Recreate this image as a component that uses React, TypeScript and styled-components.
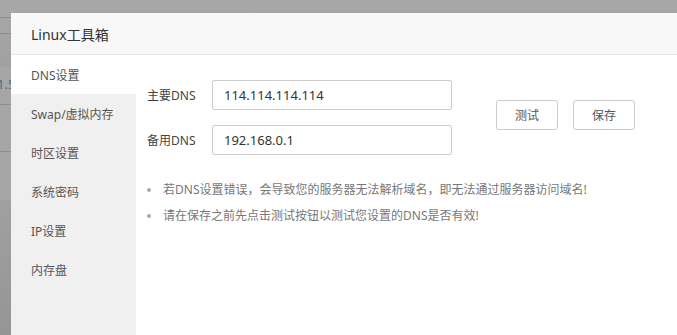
import React, { useState } from "react";
import styled, { createGlobalStyle } from "styled-components";

const Global = createGlobalStyle`
  html, body { margin: 0; padding: 0; }
  body {
    width: 677px;
    height: 335px;
    overflow: hidden;
    font-family: "Noto Sans", "Noto Sans CJK SC", sans-serif;
    background: #fff;
  }
  * { box-sizing: border-box; }
`;

const Backdrop = styled.div`
  position: fixed;
  inset: 0;
  background:
    linear-gradient(#8f8f8f, #8f8f8f) 0 17px / 100% 1px no-repeat,
    linear-gradient(#8f8f8f, #8f8f8f) 0 33px / 100% 1px no-repeat,
    linear-gradient(#8f8f8f, #8f8f8f) 0 104px / 100% 1px no-repeat,
    linear-gradient(#8f8f8f, #8f8f8f) 0 151px / 100% 1px no-repeat,
    linear-gradient(#a6a6a6, #a6a6a6) 0 67px / 100% 133px no-repeat,
    linear-gradient(180deg, #a8a8a8 0%, #9d9d9d 30%, #a0a0a0 60%, #959595 100%);
`;

const BackdropText = styled.span`
  position: absolute;
  left: -3px;
  top: 75px;
  font-size: 13px;
  color: #3d6f93;
`;

const Modal = styled.div`
  position: fixed;
  left: 11px;
  top: 13px;
  right: 0;
  bottom: 0;
  background: #fff;
  display: flex;
  flex-direction: column;
`;

const Header = styled.div`
  height: 42px;
  flex: none;
  background: #f8f8f8;
  border-bottom: 1px solid #e6e6e6;
  display: flex;
  align-items: center;
  padding-left: 20px;
  font-size: 14px;
  color: #333;
`;

const Body = styled.div`
  flex: 1;
  display: flex;
  min-height: 0;
`;

const Sidebar = styled.ul`
  list-style: none;
  margin: 0;
  padding: 0;
  width: 125px;
  flex: none;
  background: #f0f0f0;
`;

const NavItem = styled.li<{ $active?: boolean }>`
  height: 39px;
  display: flex;
  align-items: center;
  padding-left: 20px;
  font-size: 12px;
  color: #555;
  background: ${(p) => (p.$active ? "#fff" : "transparent")};
  cursor: pointer;
`;

const Content = styled.div`
  flex: 1;
  padding: 25px 0 0 11px;
`;

const Top = styled.div`
  display: flex;
  align-items: flex-start;
`;

const Form = styled.div`
  display: flex;
  flex-direction: column;
  gap: 15px;
`;

const Row = styled.div`
  display: flex;
  align-items: center;
`;

const Label = styled.label`
  width: 65px;
  font-size: 12px;
  color: #444;
`;

const Input = styled.input`
  width: 240px;
  height: 30px;
  border: 1px solid #ccc;
  border-radius: 2px;
  padding: 0 11px;
  font-family: inherit;
  font-size: 13px;
  color: #333;
  outline: none;
`;

const Buttons = styled.div`
  display: flex;
  gap: 15px;
  margin: 20px 0 0 44px;
`;

const Button = styled.button`
  width: 62px;
  height: 30px;
  border: 1px solid #ccc;
  border-radius: 3px;
  background: #fff;
  font-family: inherit;
  font-size: 12px;
  color: #555;
  cursor: pointer;
`;

const Tips = styled.ul`
  list-style: none;
  margin: 22px 0 0;
  padding: 0;
`;

const Tip = styled.li`
  position: relative;
  height: 26px;
  line-height: 26px;
  padding-left: 16px;
  font-size: 12px;
  color: #777;
  &::before {
    content: "";
    position: absolute;
    left: 0;
    top: 11px;
    width: 4px;
    height: 4px;
    border-radius: 50%;
    background: #aaa;
  }
`;

const navItems = ["DNS设置", "Swap/虚拟内存", "时区设置", "系统密码", "IP设置", "内存盘"];

export default function App() {
  const [active, setActive] = useState(0);
  const [primary, setPrimary] = useState("114.114.114.114");
  const [secondary, setSecondary] = useState("192.168.0.1");
  return (
    <>
      <Global />
      <Backdrop>
        <BackdropText>1.5</BackdropText>
      </Backdrop>
      <Modal>
        <Header>Linux工具箱</Header>
        <Body>
          <Sidebar>
            {navItems.map((t, i) => (
              <NavItem key={t} $active={i === active} onClick={() => setActive(i)}>
                {t}
              </NavItem>
            ))}
          </Sidebar>
          <Content>
            <Top>
              <Form>
                <Row>
                  <Label>主要DNS</Label>
                  <Input value={primary} onChange={(e) => setPrimary(e.target.value)} />
                </Row>
                <Row>
                  <Label>备用DNS</Label>
                  <Input value={secondary} onChange={(e) => setSecondary(e.target.value)} />
                </Row>
              </Form>
              <Buttons>
                <Button>测试</Button>
                <Button>保存</Button>
              </Buttons>
            </Top>
            <Tips>
              <Tip>若DNS设置错误，会导致您的服务器无法解析域名，即无法通过服务器访问域名!</Tip>
              <Tip>请在保存之前先点击测试按钮以测试您设置的DNS是否有效!</Tip>
            </Tips>
          </Content>
        </Body>
      </Modal>
    </>
  );
}
